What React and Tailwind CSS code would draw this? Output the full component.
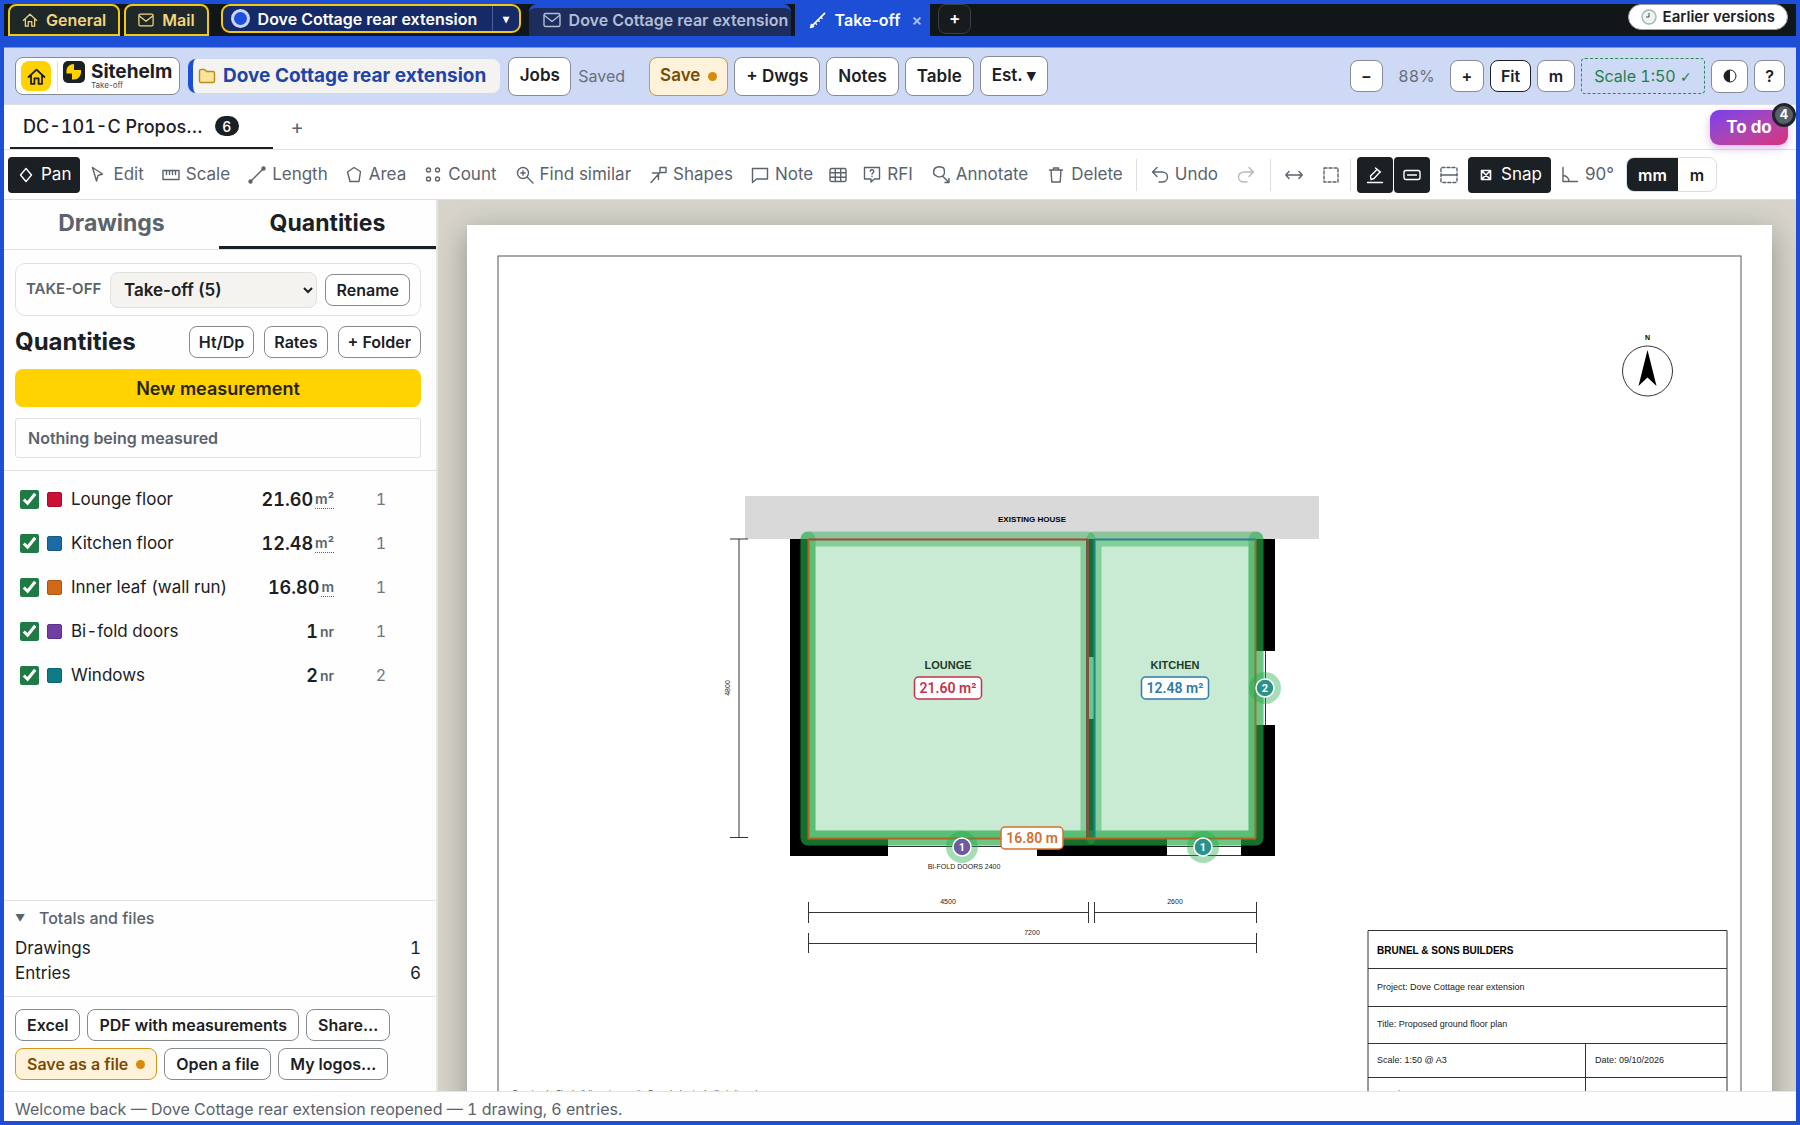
import React from "react";

const base = {
  fill: "none",
  stroke: "currentColor",
  strokeWidth: 1.4,
  strokeLinecap: "round",
  strokeLinejoin: "round",
};

function Icon({ children, size = "size-[18px]", ...rest }) {
  return (
    <svg viewBox="0 0 18 18" className={`${size} shrink-0`} aria-hidden="true" {...base} {...rest}>
      {children}
    </svg>
  );
}

const icons = {
  pan: <path d="M9 2.500 14.500 9 9 15.500 3.500 9Z" />,
  edit: <path d="M3.500 1.500 13.500 8 9 9.500 7.500 15Z" />,
  scale: <path d="M1 4.500h16v9H1ZM4.500 4.500v4M7.500 4.500v4M10.500 4.500v4M13.500 4.500v4" />,
  length: (
    <>
      <circle cx="2.500" cy="15.500" r="1.500" fill="currentColor" />
      <circle cx="15.500" cy="2.500" r="1.500" fill="currentColor" />
      <path d="M3.500 14.500 14.500 3.500" />
    </>
  ),
  area: <path d="M9 1.500 15.500 5.500 14 15.500H5L2.500 6Z" />,
  count: (
    <>
      <circle cx="4.500" cy="4" r="2" />
      <circle cx="13.500" cy="4" r="2" />
      <circle cx="4.500" cy="13" r="2" />
      <circle cx="13.500" cy="13" r="2" />
    </>
  ),
  find: (
    <>
      <circle cx="7" cy="7" r="5.500" />
      <path d="M11 11 17 17M7 4.800v4.400M4.800 7h4.400" />
    </>
  ),
  shapes: <path d="M11 1.500h6v5h-6ZM11 6.500 2 16.500M3.500 7H9.500v6.500" />,
  note: <path d="M1.500 2.500h15v10.500H5.500L1.500 16.500Z" />,
  table: <path d="M2.500 2.500h13a1.500 1.500 0 0 1 1.500 1.500v10a1.500 1.500 0 0 1-1.500 1.500h-13A1.500 1.500 0 0 1 1 14V4a1.500 1.500 0 0 1 1.500-1.500ZM1 6.800h16M1 11.200h16M6.300 2.500v13M11.700 2.500v13" />,
  rfi: (
    <>
      <path d="M1.500 1.500h15v11.500h-5L8 16v-3H1.500Z" />
      <path d="M7.200 5.200c.3-2 3.600-1.800 3.600.2 0 1.400-1.800 1.300-1.800 2.800M9 10.300v.2" />
    </>
  ),
  annotate: (
    <>
      <path d="M4.500 1.500c1-1 4-1 5.500-.2 2 .4 2.500 2 2.300 4 .5 2-.3 4-2.300 5-2 .8-4.200.8-5.800-.5C2 9 1.300 7 1.800 5 1.800 3 2.700 2 4.500 1.500Z" />
      <path d="M11 10.500 17 16.500M17 12.500v4h-4" />
    </>
  ),
  trash: <path d="M2.500 4h13M6.500 4V2h5v2M4 4l.8 12h8.400L14 4" />,
  undo: <path d="M6 1.500 1.500 6 6 10.500M1.500 6H11c3 0 5.500 2 5.500 5s-2.500 5-5.500 5H8" />,
  redo: <path d="M12 1.500 16.500 6 12 10.500M16.500 6H7C4 6 1.500 8 1.500 11s2.500 5 5.500 5h3" />,
  arrows: <path d="M1 9h16M4 5.500 .8 9 4 12.500M14 5.500 17.200 9 14 12.500" />,
  marquee: <path d="M2 2h14v14H2Z" strokeDasharray="3 2" />,
  pen: <path d="M1.500 16.500h15M5 13.500 4.500 10 11 3.500 14 6 8 12.500ZM9.500 2 14.500 6" />,
  pill: (
    <>
      <rect x="1" y="4.500" width="16" height="9" rx="2" />
      <path d="M4.500 9h9" />
    </>
  ),
  split: (
    <>
      <rect x="1" y="1.500" width="16" height="15" rx="1" strokeDasharray="3 2" />
      <path d="M1 9h16" />
    </>
  ),
  snap: <path d="M4.500 4.500h9v9h-9ZM4.500 4.500l9 9M13.500 4.500l-9 9" strokeWidth="1.600" />,
  angle: <path d="M2 1.500V15.500H16.500M2 9.500a6 6 0 0 1 6 6" />,
  home: <path d="M1.500 9.500 9 2.500l7.500 7M3.800 7.800V16h3.200v-5.200h4V16h3.200V7.800" />,
  mail: (
    <>
      <rect x="1" y="2.500" width="16" height="13" rx="1.500" />
      <path d="M1.500 4.500 9 10.500 16.500 4.500" />
    </>
  ),
  ruler: (
    <>
      <path d="M2 16 16.500 1.500" strokeWidth="1.800" />
      <path d="M1.500 16.500 2.500 13l2.500 2.500ZM6.500 11.500l1.500 1.500M9.500 8.500 11 10M12.500 5.500 14 7" strokeWidth="1.300" fill="currentColor" />
    </>
  ),
  folder: (
    <path d="M1.500 4a1.500 1.500 0 0 1 1.500-1.500h3.500l2 2H15a1.500 1.500 0 0 1 1.500 1.500v8a1.500 1.500 0 0 1-1.500 1.500H3A1.500 1.500 0 0 1 1.500 14Z" />
  ),
};

function TopBar() {
  return (
    <nav className="flex h-8 shrink-0 items-start bg-[#111618] pl-1 text-[16px] font-semibold" aria-label="Pages">
      <button className="flex h-8 items-center gap-2 rounded-t-lg border-2 border-[#f2c811] bg-[#1f2829] px-3 text-[#f3d57f]">
        <Icon size="size-4">{icons.home}</Icon>General
      </button>
      <button className="ml-1 flex h-8 items-center gap-2 rounded-t-lg border-2 border-[#f2c811] bg-[#1f2829] px-3 text-[#f3d57f]">
        <Icon size="size-4">{icons.mail}</Icon>Mail
      </button>
      <div className="ml-3 flex h-[29px] w-[300px] items-stretch overflow-hidden rounded-[9px] border-2 border-[#f2c811] bg-[#152a66] text-white">
        <button className="flex flex-1 items-center gap-2 pl-2 whitespace-nowrap">
          <span className="size-[19px] shrink-0 rounded-full border-3 border-[#c9d6fa] bg-[#1d4fd8]" />
          Dove Cottage rear extension
        </button>
        <button className="w-[27px] border-l border-[#4a5f9c] text-[12px]" aria-label="Choose job">▾</button>
      </div>
      <button className="ml-2 flex h-8 w-[262px] items-center gap-2 overflow-hidden rounded-t-lg border-t-4 border-[#1c4fd6] bg-[#1c2d5e] pb-1 pl-[14px] whitespace-nowrap text-[#b3bdd6]">
        <Icon size="size-[18px]">{icons.mail}</Icon>Dove Cottage rear extension
      </button>
      <div className="ml-1 flex h-8 items-center bg-[#1c4fd6] pr-2 pl-[14px] text-white">
        <button className="flex items-center gap-[9px]">
          <Icon size="size-[17px]">{icons.ruler}</Icon>Take-off
        </button>
        <button className="ml-[11px] text-[#a9bff5]" aria-label="Close Take-off">×</button>
      </div>
      <button className="ml-2 h-[30px] w-[33px] rounded-lg border border-[#3a4042] bg-[#171b1d] text-[17px] text-white" aria-label="New tab">+</button>
      <button className="mr-2 ml-auto flex h-[26px] items-center gap-[6px] rounded-full border border-[#9aa0a4] bg-white px-3 text-[15px] text-[#1b2024]">
        <svg viewBox="0 0 16 16" className="size-4" fill="#eef4f4" stroke="#9bb8bb" strokeWidth="1.400" aria-hidden="true">
          <circle cx="8" cy="8" r="7" />
          <path d="M8 4v4H5" stroke="#5a4038" strokeWidth="1" />
        </svg>
        Earlier versions
      </button>
    </nav>
  );
}

const headBtn = "flex items-center justify-center rounded-lg border border-[#868b94] bg-white font-semibold text-[#1b2024]";

function Header() {
  return (
    <header className="flex h-[58px] shrink-0 items-center border-t border-b border-t-[#6f95f5] border-b-[#dcdfe4] bg-[#ced9f6] pr-[11px] pl-[11px]">
      <div className="flex h-[38px] w-[165px] shrink-0 items-center rounded-lg border border-[#868b94] bg-white pl-[5px]">
        <button className="flex size-[30px] items-center justify-center rounded-lg bg-[#ffd200] text-[#1b2024]" aria-label="Home">
          <Icon size="size-[19px]" strokeWidth="1.700">{icons.home}</Icon>
        </button>
        <span className="ml-[6px] h-[30px] w-px bg-[#dedfdd]" />
        <svg viewBox="0 0 22 22" className="mb-2 ml-[5px] size-[22px]" aria-hidden="true">
          <rect width="22" height="22" rx="5" fill="#1b2024" />
          <path d="M11 3C6.500 3 3.500 6 3.500 10v2.500H11V9h7v2c0 4-3 7.500-7 7.500H9v-6h2Z" fill="#ffd200" />
        </svg>
        <div className="ml-[6px] flex flex-col">
          <span className="text-[19px] leading-[19px] font-bold text-[#1b2024]">Sitehelm</span>
          <span className="text-[8px] leading-[9px] text-[#4b5258]">Take-off</span>
        </div>
      </div>
      <button className="ml-2 flex h-[34px] shrink-0 items-center gap-[7px] rounded-lg border-l-[5px] border-[#1c4fd6] bg-[#f4f3f0] pr-[14px] pl-[5px] text-[19px] font-bold text-[#1f44a6]">
        <Icon size="size-[18px]" stroke="#bb8a17" fill="#fae59b">{icons.folder}</Icon>
        Dove Cottage rear extension
      </button>
      <button className={`${headBtn} ml-2 h-[39px] w-[63px] text-[17px]`}>Jobs</button>
      <span className="ml-[7px] text-[16px] text-[#68707a]">Saved</span>
      <button className="ml-6 flex h-[39px] items-center gap-2 rounded-lg border border-[#d8971c] bg-[#fff2da] px-[10px] text-[17px] font-semibold text-[#7a4b05]">
        Save<span className="size-[9px] rounded-full bg-[#d88b0a]" />
      </button>
      <div className="ml-[6px] flex items-end gap-[6px] text-[17px]">
        <button className={`${headBtn} h-[39px] px-[11px]`}>+ Dwgs</button>
        <button className={`${headBtn} h-[39px] px-[11px]`}>Notes</button>
        <button className={`${headBtn} h-[39px] px-[11px]`}>Table</button>
        <button className={`${headBtn} h-[40px] px-[11px]`}>Est. ▾</button>
      </div>
      <div className="ml-auto flex items-center gap-[6px] text-[16px]">
        <button className={`${headBtn} h-8 w-[33px]`} aria-label="Zoom out">−</button>
        <span className="w-[55px] text-center text-[#68707a] tabular-nums">88%</span>
        <button className={`${headBtn} h-8 w-[34px]`} aria-label="Zoom in">+</button>
        <button className="h-8 w-[41px] rounded-lg border border-[#1b2024] bg-white font-semibold text-[#1b2024]">Fit</button>
        <button className={`${headBtn} h-8 w-[38px]`}>m</button>
        <button className="h-9 w-[124px] rounded-[4px] border border-dashed border-[#2b8a57] text-[#1f7f4b] tabular-nums">
          Scale 1:50 <span className="font-['DejaVu_Sans',sans-serif] text-[14px]">✓</span>
        </button>
        <button className={`${headBtn} h-[33px] w-[37px]`} aria-label="Contrast">
          <svg viewBox="0 0 14 14" className="size-[14px]" aria-hidden="true">
            <circle cx="7" cy="7" r="6" fill="none" stroke="currentColor" />
            <path d="M7 1a6 6 0 0 0 0 12Z" fill="currentColor" />
          </svg>
        </button>
        <button className={`${headBtn} h-8 w-[31px]`} aria-label="Help">?</button>
      </div>
    </header>
  );
}

function SheetTabs() {
  return (
    <div className="flex h-[45px] shrink-0 items-start border-b border-[#dfe0df] bg-white pl-[6px] text-[#1b2024]">
      <button className="flex h-11 w-[263px] items-center gap-3 border-b-2 border-[#1b2024] pl-[13px] text-[18px] font-medium tabular-nums">
        DC-101-C Propos…
        <span className="flex h-5 w-6 items-center justify-center rounded-full bg-[#1b2024] text-[14px] text-white">6</span>
      </button>
      <button className="ml-[14px] flex h-11 w-[20px] items-center justify-center text-[20px] text-[#5b636d]" aria-label="Add drawing">+</button>
      <div className="relative mt-[5px] mr-2 ml-auto">
        <button className="h-[35px] w-[78px] rounded-[9px] bg-linear-to-br from-[#7a3bed] to-[#dc2a78] text-[17px] font-bold text-white shadow-[0_3px_9px_rgba(150,50,200,.35)]">To do</button>
        <span className="absolute -top-[7px] -right-2 flex size-6 items-center justify-center rounded-full border-[3px] border-[#1f2529] bg-[#586069] text-[13px] font-bold text-white">4</span>
      </div>
    </div>
  );
}

function Tool({ icon, label, name, on, dim, box = "px-[9px]" }) {
  const tone = on ? "bg-[#1b2024] text-white" : dim ? "text-[#b5b9bd]" : "text-[#5b636d]";
  return (
    <button aria-label={name || label} className={`flex h-9 shrink-0 items-center gap-[6px] rounded-[4px] whitespace-nowrap ${box} ${tone}`}>
      <Icon>{icons[icon]}</Icon>
      {label && <span className="pt-px">{label}</span>}
    </button>
  );
}

const Rule = () => <span className="h-8 w-px shrink-0 bg-[#dcdddc]" />;

function Toolbar() {
  return (
    <div className="flex h-[50px] shrink-0 items-center gap-px border-b border-[#dfe0df] bg-white pl-1 text-[17px]">
      <Tool icon="pan" label="Pan" on />
      <Tool icon="edit" label="Edit" box="px-2" />
      <Tool icon="scale" label="Scale" />
      <Tool icon="length" label="Length" box="px-2" />
      <Tool icon="area" label="Area" box="px-2" />
      <Tool icon="count" label="Count" />
      <Tool icon="find" label="Find similar" />
      <Tool icon="shapes" label="Shapes" box="px-2" />
      <Tool icon="note" label="Note" />
      <Tool icon="table" name="Table" box="px-[6px]" />
      <Tool icon="rfi" label="RFI" />
      <Tool icon="annotate" label="Annotate" />
      <Tool icon="trash" label="Delete" box="pr-3 pl-[9px]" />
      <Rule />
      <Tool icon="undo" label="Undo" box="ml-1 px-[9px]" />
      <Tool icon="redo" name="Redo" dim />
      <span className="w-1" />
      <Rule />
      <Tool icon="arrows" name="Stretch" box="ml-1 px-[9px]" />
      <Tool icon="marquee" name="Select area" />
      <Rule />
      <Tool icon="pen" name="Draw" on box="ml-[5px] px-[9px]" />
      <Tool icon="pill" name="Labels" on />
      <Tool icon="split" name="Split" />
      <Tool icon="snap" label="Snap" on />
      <Tool icon="angle" label="90°" />
      <div className="ml-[2px] flex h-[35px] shrink-0 overflow-hidden rounded-lg border border-[#dcdddc] text-[16px] font-semibold">
        <button className="w-[51px] bg-[#1b2024] text-white">mm</button>
        <button className="w-[38px] text-[#1b2024]">m</button>
      </div>
    </div>
  );
}

const rows = [
  { name: "Lounge floor", value: "21.60", unit: "m²", n: 1, dot: "bg-[#cc0f34] border-[#a80c2b]" },
  { name: "Kitchen floor", value: "12.48", unit: "m²", n: 1, dot: "bg-[#1d6ba3] border-[#175785]" },
  { name: "Inner leaf (wall run)", value: "16.80", unit: "m", n: 1, dot: "bg-[#d2691a] border-[#ad5614]" },
  { name: "Bi-fold doors", value: "1", unit: "nr", n: 1, dot: "bg-[#6f3fa3] border-[#5b3386]" },
  { name: "Windows", value: "2", unit: "nr", n: 2, dot: "bg-[#0d7c85] border-[#0a656c]" },
];

const sideBtn = "h-8 shrink-0 rounded-lg border border-[#868b90] bg-white text-[16px] font-semibold whitespace-nowrap text-[#1b2024]";

function Sidebar() {
  return (
    <aside className="flex w-[434px] shrink-0 flex-col border-r-2 border-[#e4e4e0] bg-[#fefefe] text-[#1b2024]">
      <div className="flex h-[50px] shrink-0 border-b border-[#dfe0df] text-[23px] font-bold">
        <button className="w-[215px] pb-[2px] text-[#5b636d]">Drawings</button>
        <button className="flex-1 border-b-3 border-[#1b2024] pt-px">Quantities</button>
      </div>
      <div className="flex shrink-0 flex-col border-b border-[#dfe0df] pt-[13px] pr-[15px] pb-3 pl-[11px]">
        <div className="flex h-[53px] items-center rounded-[10px] border border-[#e1e1de] px-[10px]">
          <label htmlFor="takeoff" className="w-[84px] text-[15px] font-semibold text-[#5b636d]">TAKE-OFF</label>
          <select id="takeoff" className="h-9 min-w-0 flex-1 rounded-lg border border-[#e1e1de] bg-[#f4f3f0] pl-[9px] text-[17px] font-semibold">
            <option>Take-off (5)</option>
          </select>
          <button className={`${sideBtn} ml-2 px-[10px]`}>Rename</button>
        </div>
        <div className="mt-[10px] flex items-center gap-[10px]">
          <h2 className="mr-auto text-[24px] leading-8 font-bold">Quantities</h2>
          <button className={`${sideBtn} px-[9px]`}>Ht/Dp</button>
          <button className={`${sideBtn} px-[9px]`}>Rates</button>
          <button className={`${sideBtn} px-[9px]`}>+ Folder</button>
        </div>
        <button className="mt-[11px] h-[38px] rounded-lg bg-[#ffd200] pt-px text-[18px] font-semibold text-[#26250c]">New measurement</button>
        <p className="mt-[11px] h-10 rounded-[3px] border border-[#dfe0df] pl-3 text-[16px] leading-[38px] font-semibold text-[#5b636d]">Nothing being measured</p>
      </div>
      <ul className="min-h-0 flex-1 overflow-hidden pt-[6px]">
        {rows.map((r, i) => (
          <li key={r.name} className="flex h-11 items-center pr-[50px] pl-4 text-[17px] tabular-nums">
            <input id={`row${i}`} type="checkbox" defaultChecked className="size-[19px] accent-[#1f7a46]" />
            <span className={`ml-2 size-[15px] rounded-[2px] border ${r.dot}`} />
            <label htmlFor={`row${i}`} className="ml-[9px] pt-[2px]">{r.name}</label>
            <span className="ml-auto text-[18px] font-semibold">{r.value}</span>
            <span className={r.unit === "nr" ? "ml-[2px] text-[14px] font-semibold text-[#5b636d]" : "ml-[2px] border-b border-dotted border-[#5b636d] text-[14px] leading-[18px] font-semibold text-[#5b636d]"}>{r.unit}</span>
            <span className="w-[52px] text-right text-[16px] text-[#6f767e]">{r.n}</span>
          </li>
        ))}
      </ul>
      <section className="shrink-0 border-t border-[#dfe0df] pr-[15px] pl-[11px]">
        <button className="flex h-[34px] items-center text-[16px] font-medium text-[#5b636d]">
          <span className="w-6 text-left text-[10px]">▼</span>Totals and files
        </button>
        <dl className="grid grid-cols-[1fr_auto] pt-px pb-[10px] text-[17px] leading-[25px] tabular-nums">
          <dt>Drawings</dt><dd>1</dd>
          <dt>Entries</dt><dd>6</dd>
        </dl>
      </section>
      <div className="flex shrink-0 flex-wrap gap-x-[7px] gap-y-[7px] border-t border-[#dfe0df] px-[11px] pt-3 pb-[11px]">
        <button className={`${sideBtn} px-[11px]`}>Excel</button>
        <button className={`${sideBtn} px-[11px]`}>PDF with measurements</button>
        <button className={`${sideBtn} px-[11px]`}>Share…</button>
        <button className="flex h-8 items-center gap-2 rounded-lg border border-[#d8971c] bg-[#fff2da] px-[11px] text-[16px] font-semibold text-[#7a4b05]">
          Save as a file<span className="size-[9px] rounded-full bg-[#d88b0a]" />
        </button>
        <button className={`${sideBtn} px-[11px]`}>Open a file</button>
        <button className={`${sideBtn} px-[11px]`}>My logos…</button>
      </div>
    </aside>
  );
}

function Badge({ x, y, text, fill }) {
  return (
    <g>
      <circle cx={x} cy={y} r="16" fill="#22aa45" opacity=".4" />
      <circle cx={x} cy={y} r="9" fill={fill} stroke="#fff" strokeWidth="1.500" />
      <text x={x} y={y + 4} textAnchor="middle" fontSize="11" fontWeight="700" fill="#fff" fontFamily="Roboto, sans-serif">{text}</text>
    </g>
  );
}

function Tag({ x, y, w, text, color }) {
  return (
    <g>
      <rect x={x - w / 2} y={y - 11} width={w} height="22" rx="4" fill="#fdfefd" stroke={color} strokeWidth="1.500" />
      <text x={x} y={y + 5} textAnchor="middle" fontSize="14" fontWeight="600" fill={color} fontFamily="Roboto, sans-serif">{text}</text>
    </g>
  );
}

function Plan() {
  return (
    <svg viewBox="467 225 1305 923" className="block h-auto w-full" fontFamily="'Liberation Sans', Arial, sans-serif" role="img" aria-label="Proposed ground floor plan">
      <rect x="498" y="256" width="1243" height="862" fill="none" stroke="#555" />
      <circle cx="1647.500" cy="371" r="25" fill="none" stroke="#333" />
      <path d="M1647.500 350 1656.500 386 1647.500 377.500 1638.500 386Z" />
      <text x="1647.500" y="340" fontSize="7" fontWeight="700" textAnchor="middle">N</text>

      <rect x="745" y="496" width="574" height="43" fill="#d9d9d9" />
      <text x="1032" y="522" fontSize="8" fontWeight="700" textAnchor="middle">EXISTING HOUSE</text>

      <path d="M790 539h18v299h80v18h-98ZM1037 838h130v18h-130ZM1241 838h15v-113h19v131h-34ZM1256 539h19v112h-19Z" />
      <path d="M1088 539h6v118h-6ZM1088 719h6v119h-6Z" />
      <g stroke="#333" fill="none">
        <path d="M888 846.500h149M1167 846.500h74M1167 855.500h74M1265.500 651v74" />
        <path d="M739 539v298M730 539h18M730 837.500h18" />
        <path d="M808.500 912.500h280M1094.500 912.500h162M808.500 902v21M1088.500 902v21M1094.500 902v21M1256.500 902v21M808.500 943.500h448M808.500 933v20M1256.500 933v20" />
      </g>

      <g fill="#22aa45" fillOpacity=".24">
        <rect x="808" y="539" width="280" height="299" />
        <rect x="1094" y="539" width="162" height="299" />
      </g>
      <g fill="none" stroke="#22aa45" strokeOpacity=".42" strokeWidth="15" strokeLinejoin="round" strokeLinecap="round">
        <rect x="808" y="539" width="280" height="299" />
        <rect x="1094" y="539" width="162" height="299" />
        <path d="M808 539V838H1256V539" />
      </g>
      <g fill="none" strokeWidth="2">
        <path d="M1087.500 539V838" stroke="#7b5448" strokeWidth="3" />
        <path d="M1094.500 539V838" stroke="#1c829e" />
        <path d="M808 539.500H1088" stroke="#a8433a" />
        <path d="M1094 539.500H1256" stroke="#2f7f92" />
        <path d="M808.500 539V838.500H1256" stroke="#b5631e" />
        <path d="M1255.500 838V539" stroke="#97703c" />
      </g>

      <text x="948" y="669" fontSize="11" fontWeight="700" textAnchor="middle" fill="#1d3a2a">LOUNGE</text>
      <text x="1175" y="669" fontSize="11" fontWeight="700" textAnchor="middle" fill="#1d3a2a">KITCHEN</text>
      <Tag x={948} y={688} w={67} text="21.60 m²" color="#c9304a" />
      <Tag x={1175} y={688} w={67} text="12.48 m²" color="#2f7bab" />
      <Badge x={962} y={847} text="1" fill="#6d5a9f" />
      <Badge x={1203} y={847} text="1" fill="#2a928a" />
      <Badge x={1265} y={688} text="2" fill="#2a928a" />
      <Tag x={1032} y={838} w={62} text="16.80 m" color="#d2712e" />

      <g fontSize="7" textAnchor="middle" fill="#222">
        <text x="964" y="869">BI-FOLD DOORS 2400</text>
        <text x="948" y="904">4500</text>
        <text x="1175" y="904">2600</text>
        <text x="1032" y="935">7200</text>
        <text transform="translate(730 688) rotate(-90)">4800</text>
      </g>

      <path
        d="M1368 930.500H1727V1118H1368ZM1368 968.500H1727M1368 1006.500H1727M1368 1043.500H1727M1368 1077.500H1727M1585.500 1043V1118"
        stroke="#333"
        fill="none"
      />
      <text x="1377" y="954" fontSize="10" fontWeight="700">BRUNEL &amp; SONS BUILDERS</text>
      <g fontSize="9" fill="#222">
        <text x="1377" y="990">Project: Dove Cottage rear extension</text>
        <text x="1377" y="1027">Title: Proposed ground floor plan</text>
        <text x="1377" y="1063">Scale: 1:50 @ A3</text>
        <text x="1595" y="1063">Date: 09/10/2026</text>
        <text x="1377" y="1097">Drawing no: DC-101</text>
        <text x="1595" y="1097">Rev: C</text>
      </g>
      <text x="513" y="1095" fontSize="7" fill="#222">Do not scale. Check all dimensions on site. Example drawing for illustration only.</text>
    </svg>
  );
}

export default function App() {
  return (
    <div className="flex h-screen min-w-0 flex-col overflow-hidden border-4 border-[#1c4fd6] bg-white font-[Inter,'Noto_Sans',sans-serif]">
      <TopBar />
      <div className="h-[11px] shrink-0 bg-[#1c4fd6]" />
      <Header />
      <SheetTabs />
      <Toolbar />
      <main className="flex min-h-0 flex-1">
        <Sidebar />
        <div className="min-w-0 flex-1 overflow-hidden bg-[#d6d4cb] pt-[25px] pr-6 pl-[29px]">
          <div className="bg-white shadow-[0_8px_28px_rgba(40,50,40,.4)]">
            <Plan />
          </div>
        </div>
      </main>
      <footer className="h-[30px] shrink-0 border-t border-[#e4e4e0] bg-[#fefefe] pl-[11px] text-[16px] leading-[34px] text-[#5b636d] tabular-nums">
        Welcome back — Dove Cottage rear extension reopened — 1 drawing, 6 entries.
      </footer>
    </div>
  );
}
